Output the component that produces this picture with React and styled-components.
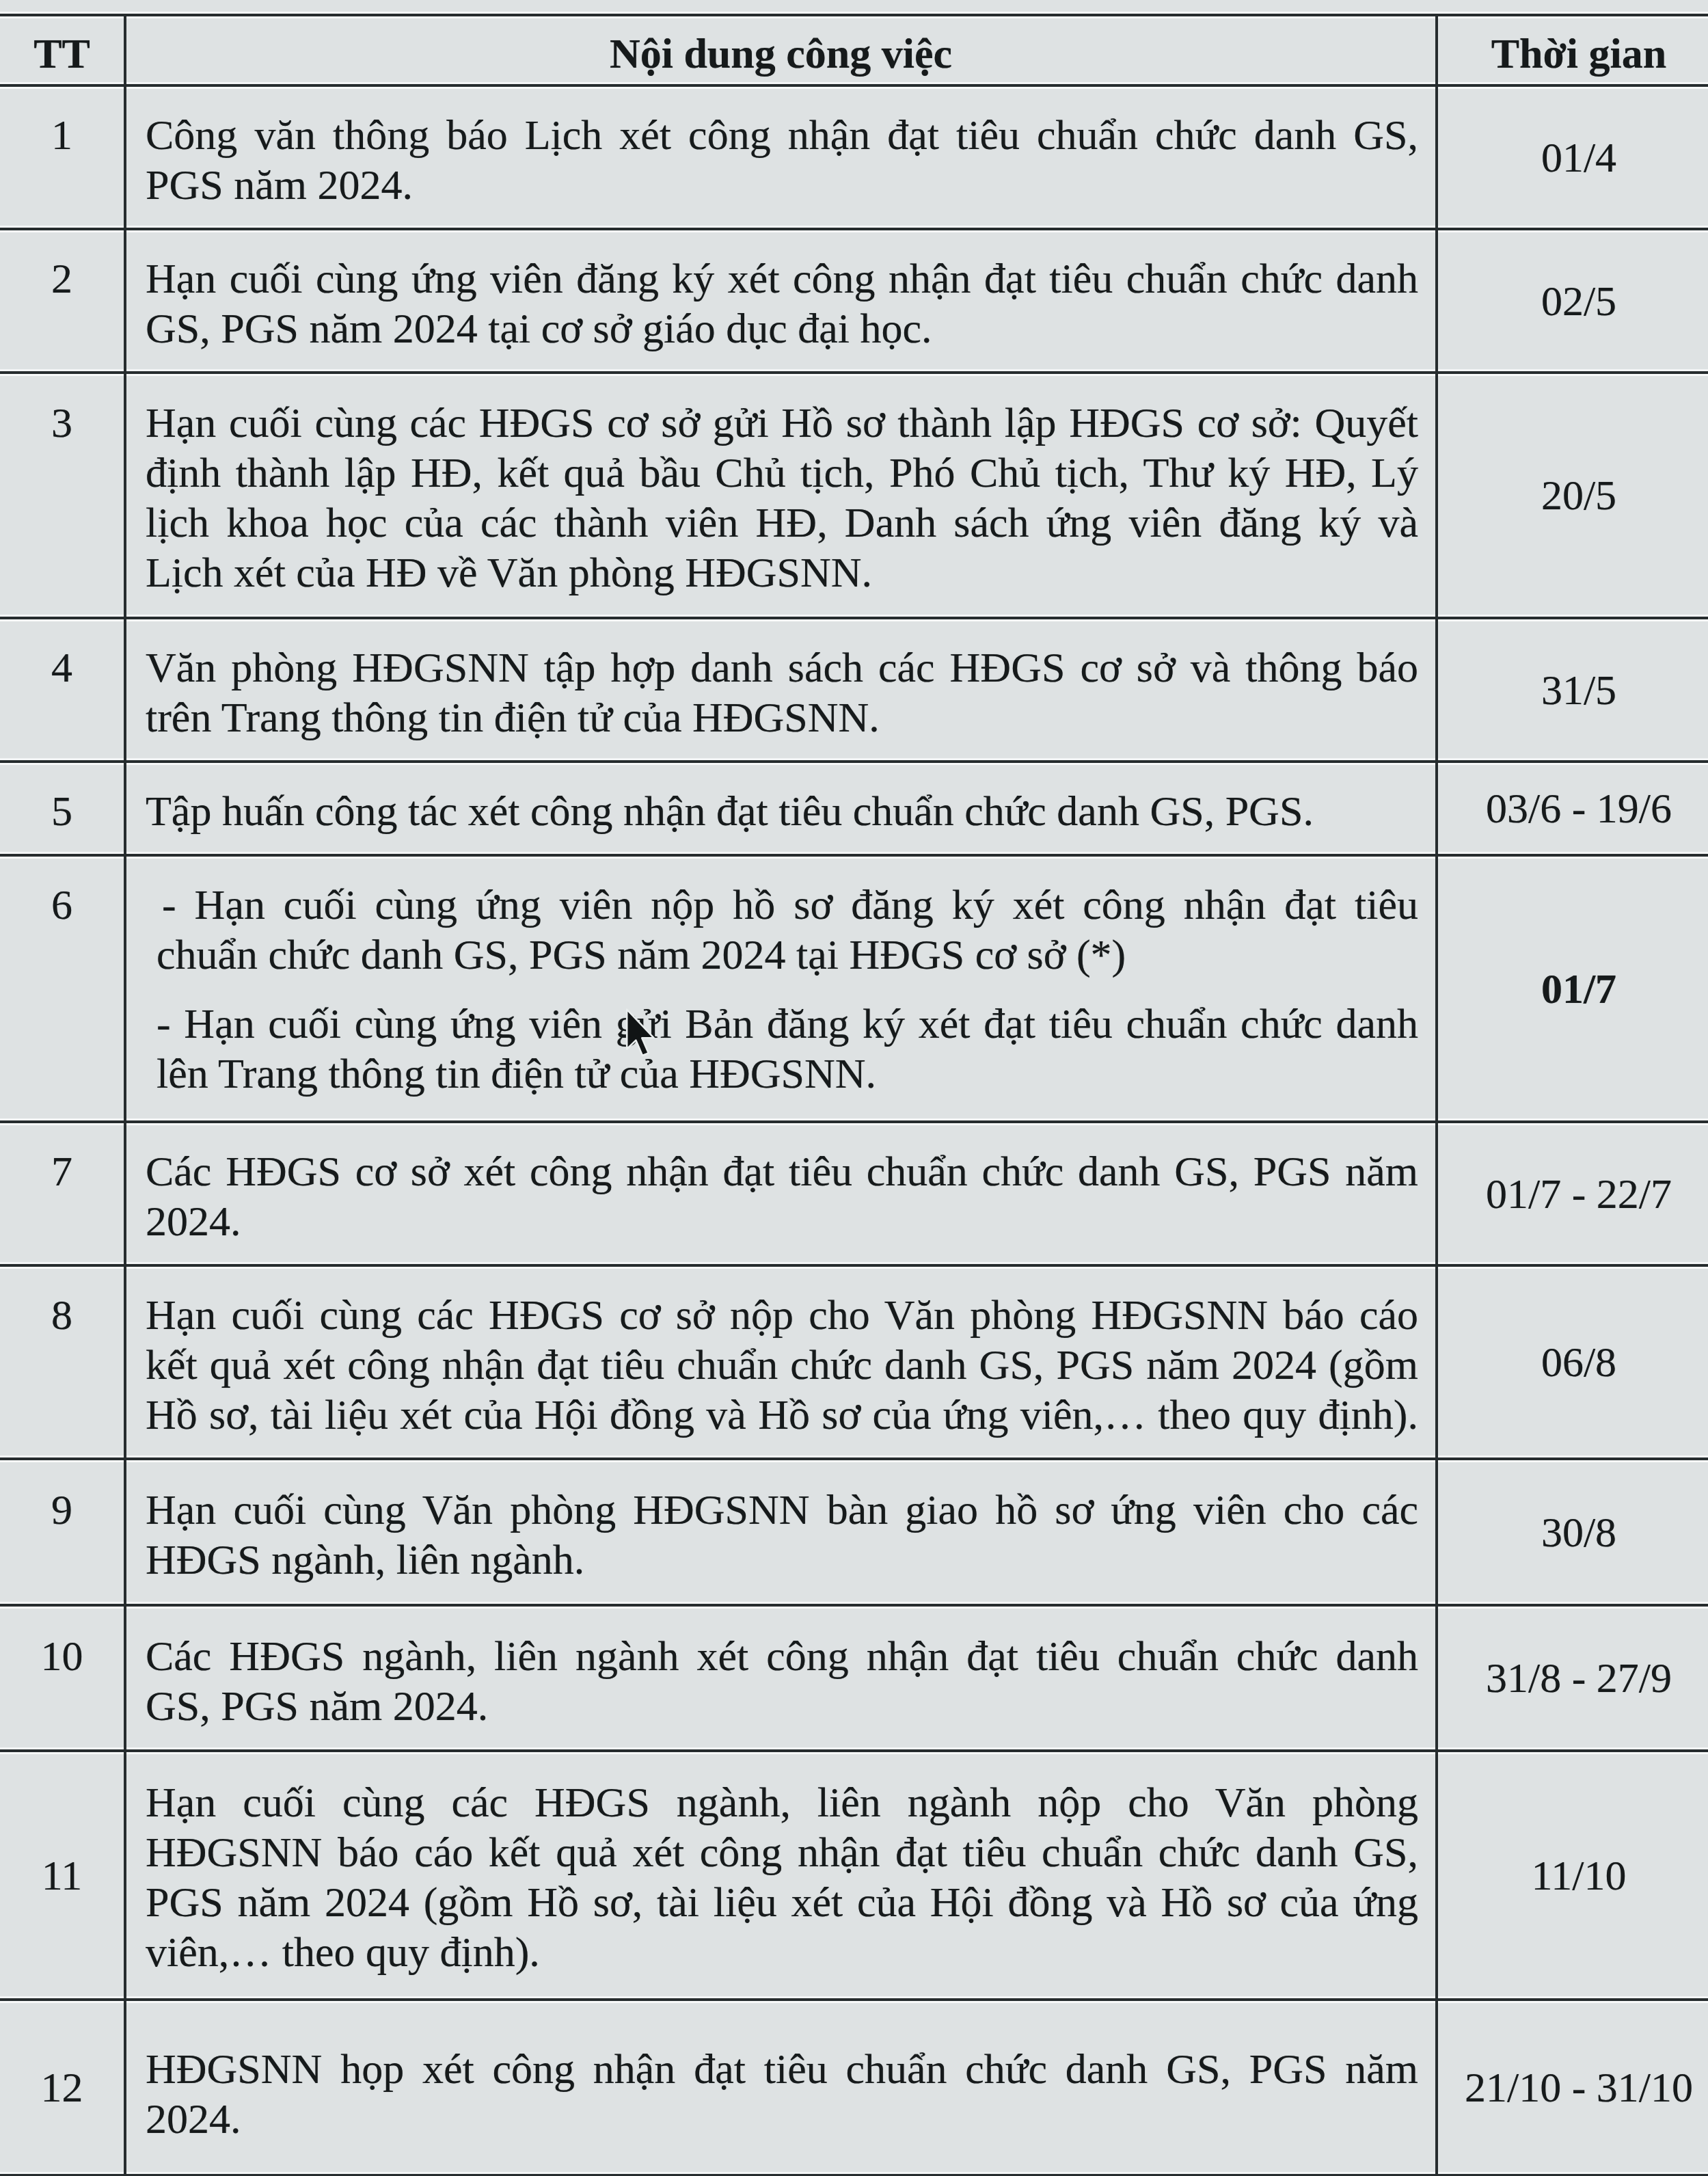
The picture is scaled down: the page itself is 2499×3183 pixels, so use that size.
import React from 'react'
import styled, { createGlobalStyle } from 'styled-components'

const ink = '#161a1b'
const rule = '#262c2e'
const halo = 'rgba(247, 250, 250, 0.8)'

const GlobalStyle = createGlobalStyle`
  html, body {
    margin: 0;
    padding: 0;
    background: #dee2e3;
    overflow: hidden;
  }
  body {
    font-family: "Liberation Serif", "Times New Roman", serif;
    color: ${ink};
    text-shadow: 0 0 1px rgba(20, 24, 25, 0.55);
  }
`

const Page = styled.div`
  position: relative;
  width: 2499px;
  height: 3183px;
  padding-top: 20px;
  box-sizing: border-box;
  overflow: hidden;
`

const Table = styled.div`
  width: 2516px;
  border-top: 4px solid ${rule};
  box-shadow: 0 -3px 0 ${halo};
`

const Row = styled.div`
  display: grid;
  grid-template-columns: 185px 1919px 412px;
  border-bottom: 4px solid ${rule};
  box-shadow: 0 3px 0 ${halo}, inset 0 -3px 0 ${halo}, inset 0 3px 0 ${halo};
  font-size: 62px;
  line-height: 73px;
`

const HeadCell = styled.div`
  box-sizing: border-box;
  padding: 18px 0 8px;
  text-align: center;
  font-weight: 700;
  border-right: ${({ $last }) => ($last ? 'none' : `4px solid ${rule}`)};
`

const NumCell = styled.div`
  box-sizing: border-box;
  border-right: 4px solid ${rule};
  padding-top: ${({ $middle, $pt }) => ($middle ? 0 : $pt)}px;
  display: flex;
  justify-content: center;
  align-items: ${({ $middle }) => ($middle ? 'center' : 'flex-start')};
`

const TextCell = styled.div`
  box-sizing: border-box;
  border-right: 4px solid ${rule};
  padding: ${({ $pt }) => $pt}px 25px ${({ $pb }) => $pb}px
    ${({ $indent }) => ($indent ? 44 : 28)}px;
`

const Para = styled.div`
  & + & {
    margin-top: 28px;
  }
`

const Line = styled.div`
  text-align: ${({ $full }) => ($full ? 'justify' : 'left')};
  text-align-last: ${({ $full }) => ($full ? 'justify' : 'left')};
  text-indent: ${({ $shift }) => ($shift ? 8 : 0)}px;
`

const TimeCell = styled.div`
  display: flex;
  align-items: center;
  justify-content: center;
  font-weight: ${({ $bold }) => ($bold ? 700 : 400)};
`

const Cursor = styled.svg`
  position: absolute;
  left: 915px;
  top: 1474px;
  width: 44px;
  height: 74px;
`

const rows = [
  {
    n: '1',
    time: '01/4',
    paras: [['Công văn thông báo Lịch xét công nhận đạt tiêu chuẩn chức danh GS,', 'PGS năm 2024.']],
  },
  {
    n: '2',
    time: '02/5',
    paras: [['Hạn cuối cùng ứng viên đăng ký xét công nhận đạt tiêu chuẩn chức danh', 'GS, PGS năm 2024 tại cơ sở giáo dục đại học.']],
  },
  {
    n: '3',
    time: '20/5',
    pt: 35,
    pb: 28,
    paras: [
      [
        'Hạn cuối cùng các HĐGS cơ sở gửi Hồ sơ thành lập HĐGS cơ sở: Quyết',
        'định thành lập HĐ, kết quả bầu Chủ tịch, Phó Chủ tịch, Thư ký HĐ, Lý',
        'lịch khoa học của các thành viên HĐ, Danh sách ứng viên đăng ký và',
        'Lịch xét của HĐ về Văn phòng HĐGSNN.',
      ],
    ],
  },
  {
    n: '4',
    time: '31/5',
    paras: [['Văn phòng HĐGSNN tập hợp danh sách các HĐGS cơ sở và thông báo', 'trên Trang thông tin điện tử của HĐGSNN.']],
  },
  {
    n: '5',
    time: '03/6 - 19/6',
    paras: [['Tập huấn công tác xét công nhận đạt tiêu chuẩn chức danh GS, PGS.']],
  },
  {
    n: '6',
    time: '01/7',
    bold: true,
    indent: true,
    pt: 34,
    pb: 32,
    paras: [
      ['- Hạn cuối cùng ứng viên nộp hồ sơ đăng ký xét công nhận đạt tiêu', 'chuẩn chức danh GS, PGS năm 2024 tại HĐGS cơ sở (*)'],
      ['- Hạn cuối cùng ứng viên gửi Bản đăng ký xét đạt tiêu chuẩn chức danh', 'lên Trang thông tin điện tử của HĐGSNN.'],
    ],
  },
  {
    n: '7',
    time: '01/7 - 22/7',
    paras: [['Các HĐGS cơ sở xét công nhận đạt tiêu chuẩn chức danh GS, PGS năm', '2024.']],
  },
  {
    n: '8',
    time: '06/8',
    lastFull: true,
    paras: [
      [
        'Hạn cuối cùng các HĐGS cơ sở nộp cho Văn phòng HĐGSNN báo cáo',
        'kết quả xét công nhận đạt tiêu chuẩn chức danh GS, PGS năm 2024 (gồm',
        'Hồ sơ, tài liệu xét của Hội đồng và Hồ sơ của ứng viên,… theo quy định).',
      ],
    ],
  },
  {
    n: '9',
    time: '30/8',
    pt: 36,
    pb: 28,
    paras: [['Hạn cuối cùng Văn phòng HĐGSNN bàn giao hồ sơ ứng viên cho các', 'HĐGS ngành, liên ngành.']],
  },
  {
    n: '10',
    time: '31/8 - 27/9',
    pt: 36,
    pb: 27,
    paras: [['Các HĐGS ngành, liên ngành xét công nhận đạt tiêu chuẩn chức danh', 'GS, PGS năm 2024.']],
  },
  {
    n: '11',
    time: '11/10',
    middle: true,
    pt: 37,
    pb: 31,
    paras: [
      [
        'Hạn cuối cùng các HĐGS ngành, liên ngành nộp cho Văn phòng',
        'HĐGSNN báo cáo kết quả xét công nhận đạt tiêu chuẩn chức danh GS,',
        'PGS năm 2024 (gồm Hồ sơ, tài liệu xét của Hội đồng và Hồ sơ của ứng',
        'viên,… theo quy định).',
      ],
    ],
  },
  {
    n: '12',
    time: '21/10 - 31/10',
    middle: true,
    pt: 63,
    pb: 44,
    paras: [['HĐGSNN họp xét công nhận đạt tiêu chuẩn chức danh GS, PGS năm', '2024.']],
  },
]

const App = () => (
  <Page>
    <GlobalStyle />
    <Table>
      <Row>
        <HeadCell>TT</HeadCell>
        <HeadCell>Nội dung công việc</HeadCell>
        <HeadCell $last>Thời gian</HeadCell>
      </Row>
      {rows.map(({ n, time, bold, indent, middle, lastFull, paras, pt = 34, pb = 26 }) => (
        <Row key={n}>
          <NumCell $pt={pt} $middle={middle}>
            {n}
          </NumCell>
          <TextCell $pt={pt} $pb={pb} $indent={indent}>
            {paras.map((lines, pi) => (
              <Para key={pi}>
                {lines.map((text, li) => (
                  <Line
                    key={li}
                    $full={li < lines.length - 1 || lastFull}
                    $shift={indent && pi === 0 && li === 0}
                  >
                    {text}
                  </Line>
                ))}
              </Para>
            ))}
          </TextCell>
          <TimeCell $bold={bold}>{time}</TimeCell>
        </Row>
      ))}
    </Table>
    <Cursor viewBox="0 0 12 20">
      <path
        d="M0.6 0.6 L0.6 16.4 L4.2 12.9 L6.8 19 L9.2 18 L6.6 12 L11.4 12 Z"
        fill="#111415"
        stroke="#e9eded"
        strokeWidth="0.7"
        strokeLinejoin="round"
      />
    </Cursor>
  </Page>
)

export default App
